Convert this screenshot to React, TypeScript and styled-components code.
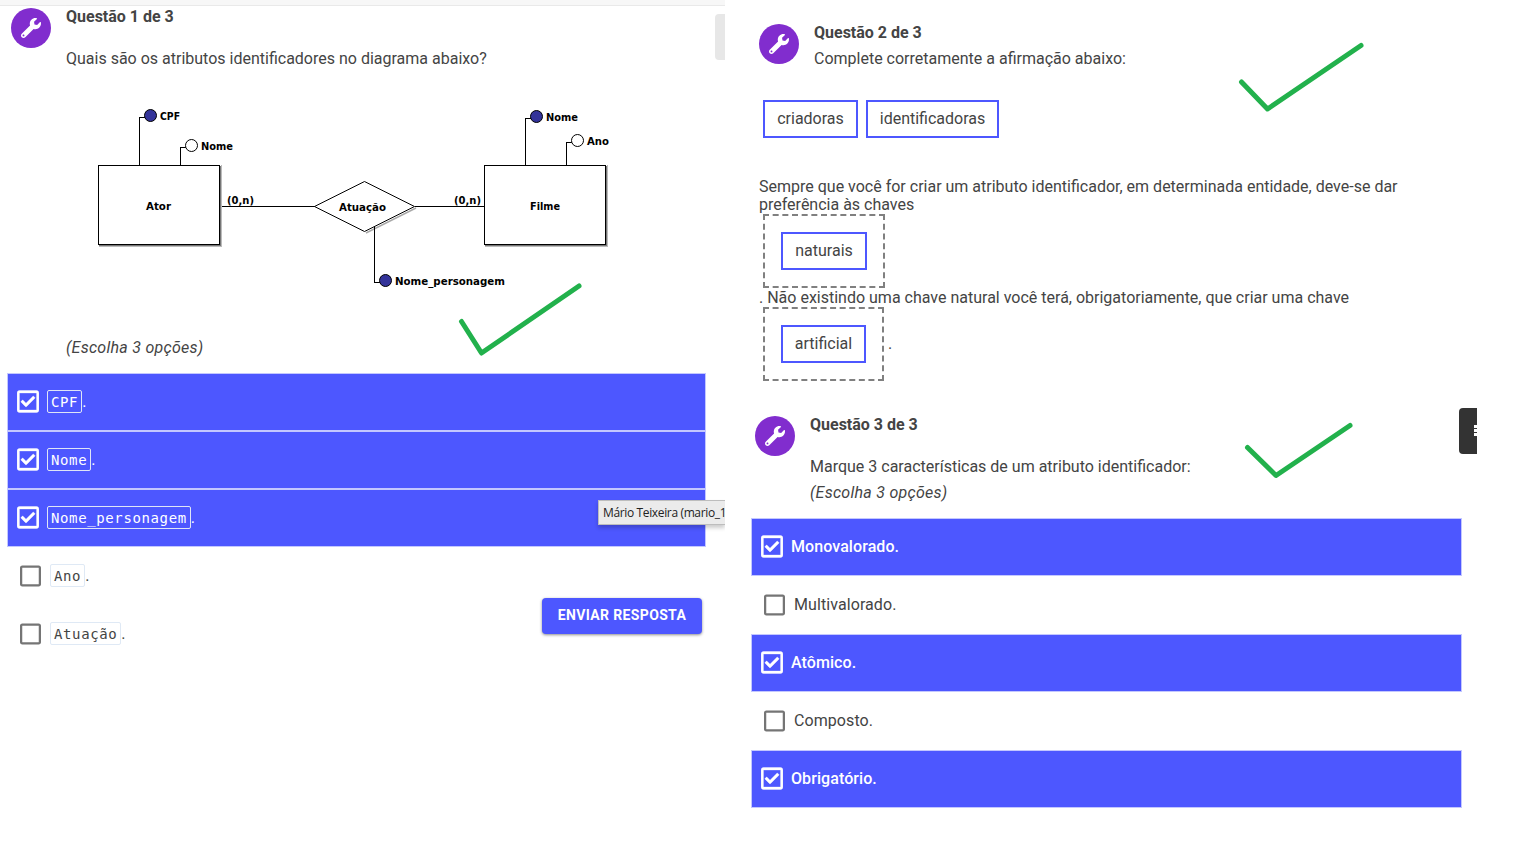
import React from "react";
import styled, { createGlobalStyle, css } from "styled-components";
import { FaWrench, FaRegCheckSquare, FaRegSquare } from "react-icons/fa";

const GlobalStyle = createGlobalStyle`
  * { box-sizing: border-box; }
  body {
    margin: 0;
    background: #fff;
    color: #444;
    font-family: Roboto, "Liberation Sans", sans-serif;
    font-size: 16px;
  }
`;

const Page = styled.main`
  position: relative;
  display: flex;
  width: 1520px;
  height: 858px;
  overflow: hidden;
`;

const LeftPane = styled.section`
  position: relative;
  width: 725px;
  overflow: hidden;
`;

const RightPane = styled.section`
  width: 795px;
  padding-top: 24px;
`;

const TopStrip = styled.div`
  height: 6px;
  background: #f7f7f7;
  border-bottom: 1px solid #e9e9e9;
`;

const Header = styled.header<{ $left: number; $top?: number }>`
  display: flex;
  gap: 15px;
  padding-left: ${(p) => p.$left}px;
  margin-top: ${(p) => p.$top ?? 0}px;
`;

const Badge = styled.div`
  display: flex;
  align-items: center;
  justify-content: center;
  flex: none;
  width: 40px;
  height: 40px;
  border-radius: 50%;
  background: #812dce;
  color: #fff;
  font-size: 20px;
`;

const HeaderText = styled.div`
  margin-top: -4px;
  line-height: 26px;
`;

const Title = styled.div<{ $gap?: number }>`
  font-weight: 700;
  margin-bottom: ${(p) => p.$gap ?? 0}px;
`;

const Hint = styled.em<{ $left?: number }>`
  display: block;
  line-height: 26px;
  letter-spacing: 0.27px;
  padding-left: ${(p) => p.$left ?? 0}px;
`;

const DiagramBox = styled.figure`
  margin: 28px 0 35px;
  height: 200px;
  svg { display: block; }
`;

const Options = styled.div<{ $left: number; $width: number }>`
  width: ${(p) => p.$width}px;
  margin-left: ${(p) => p.$left}px;
  margin-top: 12px;
`;

const Row = styled.div<{ $on?: boolean }>`
  display: flex;
  align-items: center;
  height: 58px;
  padding-left: 12px;
  border: 1px solid transparent;
  svg { flex: none; width: 21px; height: 24px; margin-right: 9px; color: #757575; }
  ${(p) =>
    p.$on &&
    css`
      padding-left: 8.5px;
      background: #4d57ff;
      border-color: #c3c7ff;
      color: #fff;
      svg {
        width: 22px;
        height: 25px;
        margin: 0 8.5px 1px 0;
        color: #fff;
        stroke: #fff;
        stroke-width: 8;
      }
    `}
`;

const Answer = styled.span<{ $bold?: boolean }>`
  display: flex;
  align-items: center;
  margin-bottom: 2px;
  font-weight: ${(p) => (p.$bold ? 500 : 400)};
  letter-spacing: 0.08px;
`;

const Code = styled.code<{ $on?: boolean }>`
  height: 23px;
  padding: 0 3px;
  border: 1px solid ${(p) => (p.$on ? "#dfe5f6" : "#dfe9f5")};
  border-radius: 2px;
  font-family: "DejaVu Sans Mono", monospace;
  font-size: 14px;
  font-weight: 400;
  letter-spacing: 0.62px;
  line-height: 22px;
`;

const Tail = styled.div`
  display: flex;
  align-items: flex-start;
  justify-content: space-between;
`;

const Submit = styled.button`
  width: 160px;
  height: 36px;
  margin: 51px 4px 0 0;
  padding: 0 0 2px;
  border: 0;
  border-radius: 4px;
  background: #4d57ff;
  box-shadow: 0 1px 3px rgba(0, 0, 0, 0.45);
  color: #fff;
  font: 700 14px Roboto, sans-serif;
  letter-spacing: 0.35px;
  white-space: nowrap;
`;

const Tooltip = styled.div`
  position: absolute;
  left: 598px;
  top: 500px;
  width: 127px;
  height: 25px;
  padding-left: 4px;
  background: #ebebeb;
  border: 1px solid #bdbdbd;
  border-right: 0;
  box-shadow: 0 3px 4px rgba(0, 0, 0, 0.2);
  color: #222;
  font: 12px/23px "Open Sans", "Noto Sans", sans-serif;
  letter-spacing: -0.36px;
  white-space: nowrap;
`;

const SideTab = styled.div`
  position: absolute;
  right: 0;
  top: 14px;
  width: 10px;
  height: 46px;
  border-radius: 4px 0 0 4px;
  background: #e7e7e7;
`;

const MenuTab = styled.div`
  position: absolute;
  left: 1459px;
  top: 408px;
  width: 18px;
  height: 46px;
  padding-top: 17px;
  border-radius: 4px 0 0 4px;
  background: #333;
`;

const MenuBar = styled.div`
  width: 3px;
  height: 3px;
  margin: 0 0 1px auto;
  background: #fff;
`;

const Chips = styled.div`
  display: flex;
  gap: 8px;
  margin: 28px 0 40px 38px;
`;

const Chip = styled.span<{ $w: number }>`
  display: block;
  width: ${(p) => p.$w}px;
  height: 38px;
  border: 2px solid #4d57ff;
  line-height: 34px;
  text-align: center;
`;

const Statement = styled.div`
  width: 680px;
  padding-left: 34px;
  line-height: 18px;
`;

const SlotLine = styled.div<{ $gap: number }>`
  display: flex;
  align-items: center;
  gap: 4px;
  margin: 0 0 ${(p) => p.$gap}px 4px;
`;

const Slot = styled.span`
  padding: 16px;
  border: 2px dashed #808080;
`;

const Marks = styled.svg`
  position: absolute;
  inset: 0;
  pointer-events: none;
`;

const FONT = "'DejaVu Sans', Verdana, sans-serif";

type LabelProps = { x: number; y: number; w: number; children: string };
const Label = ({ x, y, w, children }: LabelProps) => (
  <text x={x} y={y} textLength={w} lengthAdjust="spacingAndGlyphs" fontFamily={FONT} fontSize="11" fontWeight="700" fill="#000">
    {children}
  </text>
);

type DotProps = { x: number; y: number; filled?: boolean };
const Dot = ({ x, y, filled }: DotProps) => (
  <circle cx={x} cy={y} r="6" fill={filled ? "#333399" : "#fff"} stroke="#000" />
);

const Diagram = () => (
  <DiagramBox>
    <svg width="725" height="200" viewBox="0 100 725 200">
      <g fill="none" stroke="#000" shapeRendering="crispEdges">
        <path d="M139.500 165V117.500H145M180.500 165V147.500H186M525.500 165V118.500H531M566.500 165V142.500H572M374.500 226V282.500H380M222 206.500H315M415 206.500H484" />
      </g>
      <g fill="none" shapeRendering="crispEdges">
        <path d="M99 245.500H220.500V166M485 245.500H606.500V166" stroke="#777" />
        <path d="M99 246.500H221.500V165M485 246.500H607.500V165" stroke="#bbb" />
        <path d="M98.500 165.500H219.500V244.500H98.500ZM484.500 165.500H605.500V244.500H484.500Z" stroke="#000" />
      </g>
      <path d="M366 233L416 208" stroke="#aaa" strokeWidth="1.500" />
      <path d="M314.500 206.500L364.500 181.500L414.500 206.500L364.500 231.500Z" fill="#fff" stroke="#000" />
      <path d="M374.500 226V240" stroke="#000" shapeRendering="crispEdges" />
      <Dot x={150.5} y={115.5} filled />
      <Dot x={191.5} y={145.5} />
      <Dot x={536.5} y={116.5} filled />
      <Dot x={577.5} y={140.5} />
      <Dot x={385.5} y={280.5} filled />
      <Label x={160} y={120} w={20}>CPF</Label>
      <Label x={201} y={150} w={32}>Nome</Label>
      <Label x={546} y={121} w={32}>Nome</Label>
      <Label x={587} y={145} w={22}>Ano</Label>
      <Label x={146} y={210} w={25}>Ator</Label>
      <Label x={530} y={210} w={30}>Filme</Label>
      <Label x={339} y={211} w={47}>Atuação</Label>
      <Label x={227} y={204} w={27}>(0,n)</Label>
      <Label x={454} y={204} w={27}>(0,n)</Label>
      <Label x={395} y={285} w={110}>Nome_personagem</Label>
    </svg>
  </DiagramBox>
);

type OptionProps = { on?: boolean; code?: boolean; text: string };
const Option = ({ on, code, text }: OptionProps) => (
  <Row $on={on}>
    {on ? <FaRegCheckSquare /> : <FaRegSquare />}
    <Answer $bold={on && !code}>
      {code ? <Code $on={on}>{text}</Code> : text}.
    </Answer>
  </Row>
);

const Wrench = () => (
  <Badge>
    <FaWrench />
  </Badge>
);

export default function App() {
  return (
    <Page>
      <GlobalStyle />
      <LeftPane>
        <TopStrip />
        <Header $left={11} $top={2}>
          <Wrench />
          <HeaderText>
            <Title $gap={16}>Questão 1 de 3</Title>
            Quais são os atributos identificadores no diagrama abaixo?
          </HeaderText>
        </Header>
        <Diagram />
        <Hint $left={66}>(Escolha 3 opções)</Hint>
        <Options $left={7} $width={699}>
          <Option on code text="CPF" />
          <Option on code text="Nome" />
          <Option on code text="Nome_personagem" />
          <Tail>
            <div>
              <Option code text="Ano" />
              <Option code text="Atuação" />
            </div>
            <Submit>ENVIAR RESPOSTA</Submit>
          </Tail>
        </Options>
        <Tooltip>Mário Teixeira (mario_1</Tooltip>
        <SideTab />
      </LeftPane>
      <RightPane>
        <Header $left={34}>
          <Wrench />
          <HeaderText>
            <Title>Questão 2 de 3</Title>
            Complete corretamente a afirmação abaixo:
          </HeaderText>
        </Header>
        <Chips>
          <Chip $w={95}>criadoras</Chip>
          <Chip $w={133}>identificadoras</Chip>
        </Chips>
        <Statement>
          Sempre que você for criar um atributo identificador, em determinada entidade, deve-se dar preferência às chaves
          <SlotLine $gap={1}>
            <Slot>
              <Chip $w={86}>naturais</Chip>
            </Slot>
          </SlotLine>
          . Não existindo uma chave natural você terá, obrigatoriamente, que criar uma chave
          <SlotLine $gap={35}>
            <Slot>
              <Chip $w={85}>artificial</Chip>
            </Slot>
            .
          </SlotLine>
        </Statement>
        <Header $left={30}>
          <Wrench />
          <HeaderText>
            <Title $gap={16}>Questão 3 de 3</Title>
            Marque 3 características de um atributo identificador:
            <Hint>(Escolha 3 opções)</Hint>
          </HeaderText>
        </Header>
        <Options $left={26} $width={711}>
          <Option on text="Monovalorado" />
          <Option text="Multivalorado" />
          <Option on text="Atômico" />
          <Option text="Composto" />
          <Option on text="Obrigatório" />
        </Options>
      </RightPane>
      <MenuTab>
        <MenuBar />
        <MenuBar />
        <MenuBar />
      </MenuTab>
      <Marks width="1520" height="858" fill="none" stroke="#22b14c" strokeWidth="5" strokeLinecap="round" strokeLinejoin="round">
        <path d="M461.500 321.500L481.500 353L579 286" />
        <path d="M1241.500 82L1267.500 109L1361 45.500" />
        <path d="M1247.500 447.500L1276 475.500L1350 425.500" />
      </Marks>
    </Page>
  );
}
